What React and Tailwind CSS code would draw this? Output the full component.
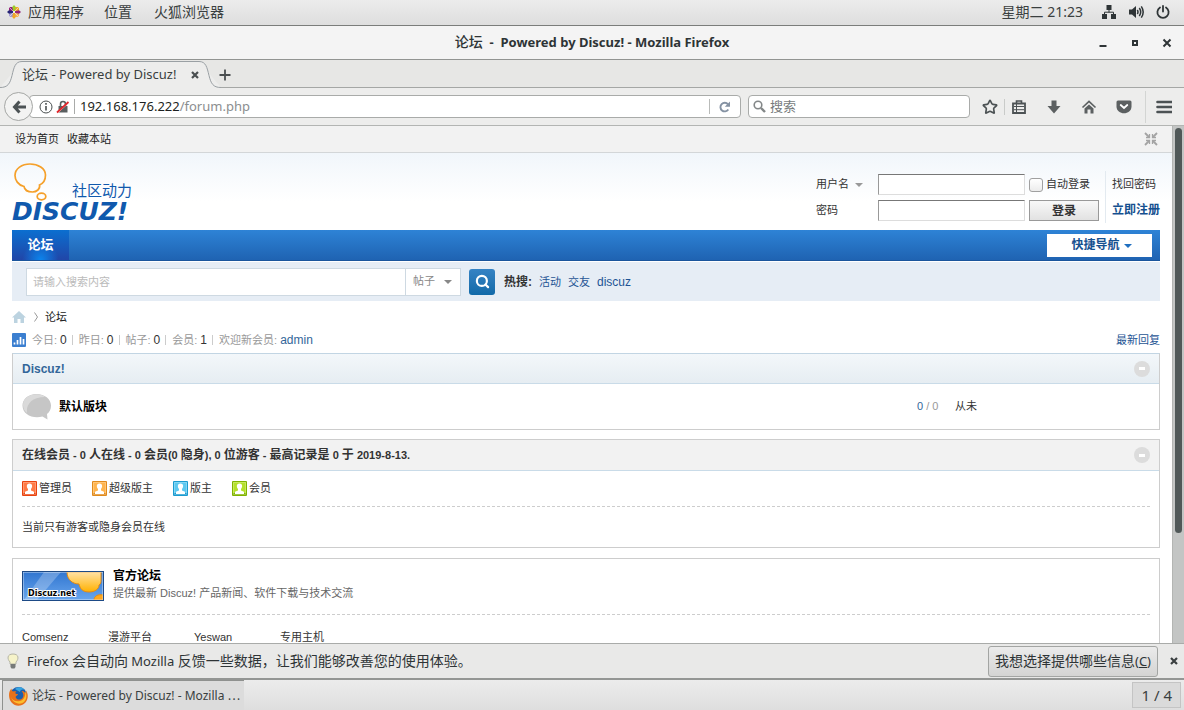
import { Search, Star } from "lucide-react";

const groups = [
  { name: "管理员", light: "#ff7a45", dark: "#e8430f" },
  { name: "超级版主", light: "#ffb44d", dark: "#e08a1c" },
  { name: "版主", light: "#5cc8f0", dark: "#1a9bd0" },
  { name: "会员", light: "#b4e02a", dark: "#7fb300" },
];

const stats = [
  { label: "今日", value: "0" },
  { label: "昨日", value: "0" },
  { label: "帖子", value: "0" },
  { label: "会员", value: "1" },
];

const Caret = ({ className }) => (
  <svg viewBox="0 0 8 4" className={`h-1 w-2 shrink-0 pointer-events-none ${className}`}>
    <path d="M0 0h8L4 4z" fill="currentColor" />
  </svg>
);

const AppsIcon = () => (
  <svg viewBox="0 0 14 14" className="h-[14px] w-[14px]">
    <path d="M7 0L9.200 2.500V6H4.800V2.500z" fill="#9ccd2a" />
    <path d="M14 7l-2.500 2.200H8V4.800h3.500z" fill="#932279" />
    <path d="M7 14l-2.200-2.500V8h4.400v3.500z" fill="#efa724" />
    <path d="M0 7l2.500-2.200H6v4.400H2.500z" fill="#262577" />
    <path d="M2 2h3.200L6.200 6.200 2 5.200z" fill="#932279" />
    <path d="M12 2v3.200L7.800 6.200 8.800 2z" fill="#efa724" />
    <path d="M12 12H8.800L7.800 7.800l4.200 1z" fill="#f2b25a" />
    <path d="M2 12V8.800l4.200-1L5.200 12z" fill="#a39ad0" />
    <path d="M2 2l10 10M12 2L2 12" stroke="#f4f4f4" strokeWidth=".6" />
  </svg>
);

const SystemBar = () => (
  <header className="flex h-[26px] shrink-0 items-center justify-between border-b border-[#7b7d7b] bg-gradient-to-b from-[#ececec] to-[#dedede] pb-px pl-[7px] pr-[14px] text-sm text-[#3a3f40]">
    <nav className="flex items-center">
      <AppsIcon />
      <button className="ml-[7px] leading-6">应用程序</button>
      <button className="ml-5 leading-6">位置</button>
      <button className="ml-[22px] leading-6">火狐浏览器</button>
    </nav>
    <div className="flex items-center">
      <span className="mr-[18px]">星期二 21:23</span>
      <svg viewBox="0 0 16 14" className="mr-3 h-[14px] w-4" fill="#2e3436">
        <path d="M5.500 0h5v5h-5zM1 9h5v5H1zM10 9h5v5h-5z" />
        <path d="M8 5v2.500M3.500 9V7.200h9V9" fill="none" stroke="#2e3436" />
      </svg>
      <svg viewBox="0 0 15 14" className="mr-3 h-[14px] w-[15px]" fill="none" stroke="#2e3436" strokeWidth="1.500">
        <path d="M0 4.500h3L7 1v12L3 9.500H0z" fill="#2e3436" stroke="none" />
        <path d="M8.300 5q1.400 2 0 4M10.300 3q2.800 4 0 8M12.300 1.300q3.800 5.700 0 11.400" />
      </svg>
      <svg viewBox="0 0 14 14" className="h-[14px] w-[14px]" fill="none" stroke="#2e3436" strokeWidth="1.800" strokeLinecap="round">
        <path d="M4 2.500a5.600 5.600 0 1 0 6 0M7 1v5.500" />
      </svg>
    </div>
  </header>
);

const TitleBar = () => (
  <div className="grid h-[34px] shrink-0 grid-cols-[1fr_auto_1fr] items-center border-b border-[#929492] bg-[#f4f4f4] px-3">
    <span />
    <h1 className="whitespace-pre text-[13px] font-bold text-[#2e3436]">
      <span className="text-sm font-medium">论坛</span>{"  -  Powered by Discuz! - Mozilla Firefox"}
    </h1>
    <div className="flex justify-end gap-[22px] text-[#2e3436]">
      <button aria-label="最小化">
        <svg viewBox="0 0 10 10" className="h-[10px] w-[10px]"><path d="M1.500 8h7" stroke="currentColor" strokeWidth="2" /></svg>
      </button>
      <button aria-label="最大化">
        <svg viewBox="0 0 10 10" className="h-[10px] w-[10px]"><path d="M3 3h4v4H3z" fill="none" stroke="currentColor" strokeWidth="2" /></svg>
      </button>
      <button aria-label="关闭">
        <svg viewBox="0 0 10 10" className="h-[10px] w-[10px]"><path d="M1.500 1.500l7 7M8.500 1.500l-7 7" stroke="currentColor" strokeWidth="2" /></svg>
      </button>
    </div>
  </div>
);

const TabBar = () => (
  <div className="flex h-7 shrink-0 bg-[#e7e7e5]">
    <svg viewBox="0 0 22 28" className="h-7 w-[22px] shrink-0" fill="#ededec" stroke="#9aa0a4">
      <path d="M0 27.500c8 0 10-4 12-12S15 1.500 22 1.500V29z" stroke="none" />
      <path d="M0 27.500c8 0 10-4 12-12S15 1.500 22 1.500" />
    </svg>
    <div className="mt-px flex w-[177px] items-center justify-between border-t border-[#9aa0a4] bg-[#ededec] text-[13px] text-[#3a3f40]">
      <span className="whitespace-nowrap">论坛 - Powered by Discuz!</span>
      <button aria-label="关闭标签页" className="text-[#4a4f50]">
        <svg viewBox="0 0 8 8" className="h-2 w-2"><path d="M1 1l6 6M7 1L1 7" stroke="currentColor" strokeWidth="2.200" /></svg>
      </button>
    </div>
    <svg viewBox="0 0 22 28" className="h-7 w-[22px] shrink-0" fill="#ededec" stroke="#9aa0a4">
      <path d="M22 27.500c-8 0-10-4-12-12S7 1.500 0 1.500V29z" stroke="none" />
      <path d="M22 27.500c-8 0-10-4-12-12S7 1.500 0 1.500" />
    </svg>
    <div className="flex flex-1 items-center border-b border-[#a5a7a5]">
      <button aria-label="新建标签页" className="-ml-[2px] pt-[3px]">
        <svg viewBox="0 0 12 12" className="h-3 w-3"><path d="M6 .5v11M.5 6h11" stroke="#4a4f50" strokeWidth="1.800" /></svg>
      </button>
    </div>
  </div>
);

const ToolButton = ({ label, children }) => (
  <button aria-label={label} className="flex w-[35px] shrink-0 justify-center">
    <svg viewBox="0 0 16 16" className="h-4 w-4">{children}</svg>
  </button>
);

const NavBar = () => (
  <div className="flex h-[38px] shrink-0 items-center border-b border-[#b3b5b3] bg-[#ededec] pl-1 pr-[3px]">
    <button aria-label="后退" className="z-10 flex h-[29px] w-[29px] shrink-0 items-center justify-center rounded-full border border-[#a4a6a4] bg-[#f3f3f2]">
      <svg viewBox="0 0 14 14" className="h-[14px] w-[14px]" fill="none" stroke="#4c5254" strokeWidth="3">
        <path d="M7.500 1.500L2.500 7l5 5.500M3 7h11" />
      </svg>
    </button>
    <div className="-ml-1 flex h-[23px] flex-1 items-center rounded-sm border border-[#a9aba9] bg-white pl-[9px] text-[13px]">
      <svg viewBox="0 0 14 14" className="h-[14px] w-[14px] shrink-0" fill="none" stroke="#4a4f50">
        <circle cx="7" cy="7" r="6" />
        <path d="M7 6v4.500M7 3v1.700" strokeWidth="1.600" />
      </svg>
      <svg viewBox="0 0 14 14" className="ml-[3px] h-[14px] w-[14px] shrink-0" fill="none">
        <path d="M2.500 6h9v6.500h-9z" fill="#5a5f60" />
        <path d="M4.500 6V4a2.500 2.500 0 0 1 5 0v2" stroke="#5a5f60" strokeWidth="1.600" />
        <path d="M1.500 13.200L13.500 2" stroke="#fff" />
        <path d="M1 12.500L12.500 2" stroke="#e0262b" strokeWidth="1.800" />
      </svg>
      <span className="ml-1 h-[15px] w-px bg-[#a9aba9]" />
      <a href="#url" className="ml-[5px] flex-1 text-[#8b8e8f]">
        <span className="text-[#1c1f20]">192.168.176.222</span>/forum.php
      </a>
      <span className="h-[15px] w-px bg-[#b9bbb9]" />
      <button aria-label="刷新" className="mx-2">
        <svg viewBox="0 0 14 14" className="h-[14px] w-[14px]">
          <path d="M10.300 9.500A4.300 4.300 0 1 1 10 4.300" fill="none" stroke="#8592a3" strokeWidth="1.900" />
          <path d="M12 1.500v5.200H6.800z" fill="#8592a3" />
        </svg>
      </button>
    </div>
    <label className="ml-[7px] flex h-[23px] w-[222px] items-center rounded-sm border border-[#a9aba9] bg-white pl-1 text-[13px]">
      <svg viewBox="0 0 13 13" className="h-[13px] w-[13px] shrink-0" fill="none" stroke="#838788">
        <circle cx="5" cy="5" r="3.800" strokeWidth="1.600" />
        <path d="M8 8l4 4" strokeWidth="2.400" />
      </svg>
      <input aria-label="搜索" placeholder="搜索" className="ml-1 w-full bg-transparent outline-none placeholder:text-[#777b7c]" />
    </label>
    <button aria-label="收藏" className="ml-3 shrink-0">
      <Star className="h-4 w-4 text-[#4c5254]" strokeWidth={2.5} />
    </button>
    <span className="ml-[6px] h-4 w-px bg-[#c9cbc9]" />
    <div className="-ml-[4px] flex">
      <ToolButton label="书签">
        <path d="M2 4.500h12V14H2z" fill="none" stroke="#4c5254" strokeWidth="1.800" />
        <path d="M5.500 4V2h5v2" fill="none" stroke="#4c5254" strokeWidth="1.600" />
        <path d="M3 7.500h10M3 10.700h10M5.500 5v8.500" stroke="#4c5254" />
      </ToolButton>
      <ToolButton label="下载">
        <path d="M5.500 1.500h5V7H14.500L8 14.500 1.500 7h4z" fill="#5c6061" />
      </ToolButton>
      <ToolButton label="主页">
        <path d="M1.500 8.500L8 2.500l6.500 6" fill="none" stroke="#5c6061" strokeWidth="1.700" />
        <path d="M3.500 9.500L8 5.500l4.500 4v5h-3v-4h-3v4h-3z" fill="#5c6061" />
      </ToolButton>
      <ToolButton label="Pocket">
        <path d="M2 1.500h12q1.500 0 1.500 1.500v4.500c0 9-15 9-15 0V3Q.5 1.500 2 1.500z" fill="#5c6061" />
        <path d="M4.700 6L8 9l3.300-3" fill="none" stroke="#fff" strokeWidth="1.800" strokeLinecap="round" />
      </ToolButton>
    </div>
    <span className="ml-1 h-8 w-px bg-[#d3d5d3]" />
    <ToolButton label="菜单">
      <path d="M1.500 3h14M1.500 8h14M1.500 13h14" stroke="#4c5254" strokeWidth="2.600" strokeLinecap="round" />
    </ToolButton>
  </div>
);

const Logo = () => (
  <a href="#home" className="flex w-[124px] flex-col pt-[10px] text-[#1059ad]">
    <span className="flex h-[38px] items-end justify-between">
      <svg viewBox="0 0 36 38" className="h-[38px] w-9" fill="none" stroke="#f5a02a" strokeWidth="1.700">
        <path d="M12 23.500C6 22 3 17 3 12.500 3 5.500 10 1 18 1s15.500 4.500 15.500 11c0 5-2.500 8.500-6 10 1 4-3 7-7 7-5 0-8-2.500-8.500-5.500z" />
        <ellipse cx="29.500" cy="33.500" rx="4.300" ry="3.300" />
      </svg>
      <span className="mr-1 text-[15px] leading-5">社区动力</span>
    </span>
    <span className="font-['DejaVu_Sans'] text-[25px] font-bold italic leading-[22px]">DISCUZ!</span>
  </a>
);

const LoginForm = () => (
  <form className="flex items-start pt-[21px] text-[#333]">
    <div className="grid grid-cols-[58px_147px_70px] items-center gap-x-1 gap-y-[5px]">
      <div className="flex items-center">
        <select aria-label="登录方式" className="w-[47px] appearance-none pr-3">
          <option>用户名</option>
        </select>
        <Caret className="-ml-2 text-[#999]" />
      </div>
      <input aria-label="用户名" className="h-[21px] w-full border border-b-[#ddd] border-l-[#999] border-r-[#ddd] border-t-[#777] bg-white" />
      <label className="flex items-center whitespace-nowrap">
        <input type="checkbox" className="mr-[3px] h-[14px] w-[14px] shrink-0 appearance-none rounded-[3px] border border-[#a0a0a0] bg-gradient-to-b from-white to-[#ececec]" />
        自动登录
      </label>
      <label htmlFor="password">密码</label>
      <input id="password" type="password" className="h-[21px] w-full border border-b-[#ddd] border-l-[#999] border-r-[#ddd] border-t-[#777] bg-white" />
      <button type="button" className="h-[21px] border border-[#999] bg-gradient-to-b from-[#f8f8f8] to-[#e2e2e2] text-[12px] font-bold leading-4">登录</button>
    </div>
    <div className="-mt-[3px] ml-[6px] flex h-[52px] flex-col border-l border-[#e3eaf0] pl-[6px] leading-[26px]">
      <a href="#lost">找回密码</a>
      <a href="#register" className="text-[12px] font-bold text-[#15508f]">立即注册</a>
    </div>
  </form>
);

const SearchBar = () => (
  <div className="mt-px flex h-[39px] items-center bg-[#e6edf5] pl-[14px]">
    <div className="flex h-7 w-[435px] border border-[#ced9e2] bg-white">
      <input aria-label="搜索内容" placeholder="请输入搜索内容" className="min-w-0 flex-1 px-[6px] pt-px outline-none placeholder:text-[#bbb]" />
      <div className="flex w-[55px] items-center border-l border-[#ced9e2] text-[#888]">
        <select aria-label="搜索类型" className="w-[46px] appearance-none pl-[7px]">
          <option>帖子</option>
        </select>
        <Caret className="-ml-2" />
      </div>
    </div>
    <button aria-label="搜索" className="ml-2 flex h-[26px] w-[26px] items-center justify-center rounded-[3px] bg-gradient-to-b from-[#3583c4] to-[#116aa8]">
      <Search className="h-[15px] w-[15px] text-white" strokeWidth={3.5} />
    </button>
    <p className="ml-[9px] flex gap-[7px] text-[#1e5494]">
      <b className="text-[12px] leading-4 text-[#333]">热搜:</b>
      <a href="#hd" className="leading-4">活动</a>
      <a href="#jy" className="leading-4">交友</a>
      <a href="#discuz" className="text-[12px] leading-4">discuz</a>
    </p>
  </div>
);

const Collapse = () => (
  <button aria-label="收起" className="flex h-4 w-4 items-center justify-center rounded-full bg-[#dcdcdc]">
    <span className="h-[3px] w-[6px] bg-white" />
  </button>
);

const GroupIcon = ({ light, dark }) => (
  <svg viewBox="0 0 15 15" className="h-[15px] w-[15px]">
    <rect width="15" height="15" rx="1" fill={dark} />
    <rect x="1" y="1" width="13" height="11" fill={light} />
    <path d="M1.500 1.500h12v12h-12z" fill="none" stroke="#fff" strokeOpacity=".25" />
    <path d="M7.500 2.500c3.500 0 3 4 1.500 5.500v1.500l3 1.300V13H3v-2.200l3-1.300V8c-1.500-1.500-2-5.500 1.500-5.500z" fill="#fff" />
  </svg>
);

const StatsRow = () => (
  <div className="flex h-6 items-center text-[#999]">
    <svg viewBox="0 0 14 14" className="mr-[6px] h-[14px] w-[14px]">
      <rect width="14" height="14" rx="1" fill="#3b7fd0" />
      <path d="M2.500 11.500v-2M5.500 11.500V7M8.500 11.500V4M11.500 11.500V6" stroke="#fff" strokeWidth="1.700" />
    </svg>
    {stats.map((s) => (
      <span key={s.label} className="flex items-center">
        {s.label}: <em className="ml-[3px] text-[12px] not-italic text-[#333]">{s.value}</em>
        <i className="ml-[5px] mr-[6px] h-[10px] w-px bg-[#ccc]" />
      </span>
    ))}
    <span>
      欢迎新会员: <a href="#admin" className="text-[12px] text-[#336699]">admin</a>
    </span>
    <a href="#new" className="ml-auto text-[#1e5494]">最新回复</a>
  </div>
);

const BoardPanel = () => (
  <section className="border border-[#cdcdcd] border-t-[#c2d5e3]">
    <h2 className="flex h-[30px] items-center justify-between border-b border-[#c9dbe8] bg-gradient-to-b from-[#f3f7fa] to-[#e6edf2] px-[9px] text-[12px] font-bold text-[#336699]">
      <a href="#category">Discuz!</a>
      <Collapse />
    </h2>
    <table className="w-full">
      <tbody>
        <tr className="h-[45px]">
          <td className="w-[46px] pl-[9px]">
            <svg viewBox="0 0 30 28" className="h-7 w-[30px]">
              <path d="M14.500 1C22.500 1 29 6 29 12.500c0 4-1.500 6.500-4 8.500l.5 5.500-5-3c-10 2.500-20-2-20-11C.5 6 6.500 1 14.500 1z" fill="#c6c6c6" />
              <path d="M5 20C4 12 9 4 23 4 19-1 1 0 1 12c0 3 1.500 6 4 8z" fill="#dadada" />
            </svg>
          </td>
          <td className="text-[12px] font-bold text-black"><a href="#board">默认版块</a></td>
          <td className="w-[38px] text-[#999]"><span className="text-[#336699]">0</span> / 0</td>
          <td className="w-[204px] text-[#333]">从未</td>
        </tr>
      </tbody>
    </table>
  </section>
);

const Num = ({ children }) => <span className="text-[11px]">{children}</span>;

const OnlinePanel = () => (
  <section className="mt-[9px] border border-[#cdcdcd] text-[#333]">
    <h3 className="flex h-[31px] items-center justify-between border-b border-[#c9dbe8] bg-[#f2f2f2] px-[9px] font-bold">
      <span className="text-[12px]">
        在线会员<Num> - 0 </Num>人在线<Num> - 0 </Num>会员<Num>(0 </Num>隐身<Num>), 0 </Num>位游客<Num> - </Num>
        最高记录是<Num> 0 </Num>于<Num> 2019-8-13.</Num>
      </span>
      <Collapse />
    </h3>
    <div className="px-[9px]">
      <ul className="flex h-9 items-center gap-5 border-b border-dashed border-[#cdcdcd]">
        {groups.map((g) => (
          <li key={g.name} className="flex items-center gap-[2px]">
            <GroupIcon light={g.light} dark={g.dark} />
            {g.name}
          </li>
        ))}
      </ul>
      <p className="py-3 leading-4">当前只有游客或隐身会员在线</p>
    </div>
  </section>
);

const SiteBanner = () => (
  <svg viewBox="0 0 82 30" className="h-[30px] w-[82px] shrink-0">
    <defs>
      <linearGradient id="sky" x1="0" y1="0" x2="0" y2="1">
        <stop offset="0" stopColor="#2f74cf" />
        <stop offset="1" stopColor="#6aa7ee" />
      </linearGradient>
      <linearGradient id="sun" x1="0" y1="0" x2="0" y2="1">
        <stop offset="0" stopColor="#ffe2a6" />
        <stop offset="1" stopColor="#ffb100" />
      </linearGradient>
    </defs>
    <rect width="82" height="30" fill="url(#sky)" />
    <path d="M22 1h17L15 29H2z" fill="#fff" opacity=".25" />
    <path d="M45 1c0 8 6 12 12 12 1 5 4 8 10 8s10-3 10-7c2-1 2-3 2-5V1z" fill="url(#sun)" stroke="#e88b0d" />
    <path d="M72 29c0-4 4-6 9-5v5z" fill="#ffa81c" stroke="#e88b0d" />
    <rect x="1" y="1" width="80" height="28" fill="none" stroke="#fff" strokeOpacity=".7" />
    <rect x=".5" y=".5" width="81" height="29" fill="none" stroke="#1d4a86" />
    <text x="6" y="25" fontFamily="DejaVu Sans" fontSize="8" fontWeight="bold" fill="#000" stroke="#fff" strokeWidth="2" paintOrder="stroke">Discuz.net</text>
  </svg>
);

const LinksPanel = () => (
  <section className="mt-[10px] border border-[#cdcdcd] px-[9px] pt-[9px] text-[#333]">
    <div className="flex gap-[9px] border-b border-dashed border-[#cdcdcd] pb-3">
      <a href="#net" className="pt-[3px]"><SiteBanner /></a>
      <div>
        <h4 className="text-[12px] font-bold leading-4 text-black"><a href="#official">官方论坛</a></h4>
        <p className="leading-[18px] text-[#666]">提供最新 Discuz! 产品新闻、软件下载与技术交流</p>
      </div>
    </div>
    <ul className="grid grid-cols-[repeat(4,86px)] pt-[14px] leading-4">
      <li><a href="#comsenz">Comsenz</a></li>
      <li><a href="#manyou">漫游平台</a></li>
      <li><a href="#yeswan">Yeswan</a></li>
      <li><a href="#host">专用主机</a></li>
    </ul>
  </section>
);

const ForumPage = () => (
  <main className="min-w-0 flex-1 overflow-hidden bg-white font-['Liberation_Sans','Noto_Sans_CJK_SC',sans-serif] text-[11px]">
    <div className="flex h-[27px] items-center justify-between border-b border-[#d3d6d8] bg-[#f2f2f2] pl-[15px] pr-[14px] text-[#222]">
      <div className="flex gap-2">
        <a href="#sethome">设为首页</a>
        <a href="#favorite">收藏本站</a>
      </div>
      <button aria-label="切换到窄版">
        <svg viewBox="0 0 14 14" className="h-[14px] w-[14px]" fill="none" stroke="#a4a4a4" strokeWidth="1.800">
          <path d="M1 1l4 4M13 1L9 5M1 13l4-4M13 13L9 9" />
          <path d="M5.500 2v3.500H2M8.500 2v3.500H12M5.500 12V8.500H2M8.500 12V8.500H12" strokeWidth="1.300" />
        </svg>
      </button>
    </div>
    <div className="bg-gradient-to-b from-[#f1f6fb] to-white to-[48px] px-3">
      <div className="flex h-[77px] justify-between">
        <Logo />
        <LoginForm />
      </div>
      <nav className="flex h-[31px] items-center justify-between border-b border-[#1a559c] bg-gradient-to-b from-[#2e83d6] to-[#1f63b2] pr-2">
        <a href="#forum" className="h-[30px] w-[57px] bg-[radial-gradient(ellipse_at_bottom,#0b86ee,transparent_45%),linear-gradient(#0b6fd0,#2146a8)] text-center text-[13px] font-bold leading-[30px] text-white">论坛</a>
        <button className="flex h-[23px] w-[105px] items-center justify-center gap-1 bg-white pl-1 text-[12px] font-bold text-[#15508f]">
          快捷导航
          <Caret className="mt-[2px] text-[#1f6fc0]" />
        </button>
      </nav>
      <SearchBar />
      <div className="flex h-[27px] items-center pt-[5px]">
        <a href="#index" aria-label="首页">
          <svg viewBox="0 0 14 12" className="h-3 w-[14px]"><path d="M7 0l7 6.500h-2V12H8.500V8h-3v4H2V6.500H0z" fill="#bcd3e0" /></svg>
        </a>
        <svg viewBox="0 0 4 10" className="ml-2 mr-[7px] h-[10px] w-1"><path d="M.5.5L3.500 5l-3 4.500" fill="none" stroke="#999" /></svg>
        <a href="#forum" className="text-[#222]">论坛</a>
      </div>
      <StatsRow />
      <div className="h-px" />
      <BoardPanel />
      <OnlinePanel />
      <LinksPanel />
    </div>
  </main>
);

const Notification = () => (
  <div className="flex h-[37px] shrink-0 items-center border-b-2 border-t border-b-[#949694] border-t-[#a9aba9] bg-[#e9e9e8] pl-[7px] pr-[6px] text-sm text-[#2e3436]">
    <svg viewBox="0 0 12 16" className="mr-2 h-4 w-3">
      <path d="M6 1c6 0 6 5 3 8v2H3V9C0 6 0 1 6 1z" fill="#f6f3c9" stroke="#b5b5a5" />
      <path d="M3.500 11h5v3l-1 1.500h-3l-1-1.500z" fill="#777a78" />
    </svg>
    <p>
      <span className="text-[13px]">Firefox </span>会自动向<span className="text-[13px]"> Mozilla </span>
      反馈一些数据，让我们能够改善您的使用体验。
    </p>
    <button className="ml-auto h-[31px] rounded-[3px] border border-[#a3a5a3] bg-gradient-to-b from-[#ebebeb] to-[#d4d4d3] px-[6px] text-[#2e3436]">
      我想选择提供哪些信息<span className="text-[13px]">(<u>C</u>)</span>
    </button>
    <button aria-label="关闭通知" className="ml-3">
      <svg viewBox="0 0 8 8" className="h-2 w-2"><path d="M1 1l6 6M7 1L1 7" stroke="#3a3f40" strokeWidth="2.200" /></svg>
    </button>
  </div>
);

const FirefoxIcon = () => (
  <svg viewBox="0 0 20 20" className="h-5 w-5 shrink-0">
    <circle cx="10.500" cy="9.500" r="8.500" fill="#1c5fae" />
    <path d="M7 3c3-3 8-2 10 1-3-1-5 0-5 2z" fill="#37a5e0" />
    <path d="M1 9C1 6 2 4 3.500 2.500 3.500 4 4 5 5 5.500c1-.5 2.500-.5 3.500 0C7 6.500 7 7 8 8c1 0 2 0 2 .5S8 10 7.500 11c1 3 5 3.500 7 1 1.500-2 1-5-1-7 3 0 4 2 4.500 3 .5-1 0-3-.5-4 3 3 3 9 0 12.500C11 23 1 19 1 9z" fill="#e8711b" />
    <path d="M16 16c3-3 3-8 1-11 1 5-1 9-5 10-5 1-8-1-9-4 1 5 8 9 13 5z" fill="#fbbf2d" />
  </svg>
);

const Taskbar = () => (
  <footer className="flex h-[30px] shrink-0 items-center justify-between bg-gradient-to-b from-[#ececec] to-[#dedede] pl-[2px] pr-[3px] text-[#3a3f40]">
    <button className="flex h-full w-[242px] items-center gap-1 border-l border-t border-[#8f918f] bg-[#dcdcdc] pl-[5px] text-[12px]">
      <FirefoxIcon />
      <span className="whitespace-nowrap">论坛 - Powered by Discuz! - Mozilla ⋯</span>
    </button>
    <button className="h-[26px] border border-[#c4c4c4] bg-[#dadada] px-2 text-[15px] leading-6">1 / 4</button>
  </footer>
);

const App = () => {
  return (
    <div className="flex h-screen flex-col overflow-hidden font-['Noto_Sans','Noto_Sans_CJK_SC',sans-serif]">
      <SystemBar />
      <TitleBar />
      <TabBar />
      <NavBar />
      <div className="flex min-h-0 flex-1">
        <ForumPage />
        <div className="w-3 shrink-0 border-l border-[#b3b5b3] bg-[#c3c5c4] py-[2px] pl-[2px]">
          <div className="h-[79%] w-[7px] rounded-full bg-[#505858]" />
        </div>
      </div>
      <Notification />
      <Taskbar />
    </div>
  );
};

export default App;
